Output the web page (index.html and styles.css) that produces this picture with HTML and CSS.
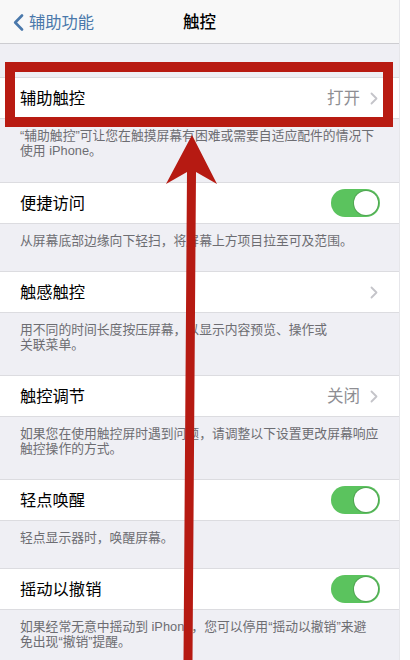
FILE: index.html
```html
<!DOCTYPE html>
<html lang="zh-CN">
<head>
<meta charset="utf-8">
<title>触控</title>
<link rel="stylesheet" href="styles.css">
</head>
<body>
<div class="screen">
  <header class="nav">
    <div class="back">
      <svg class="back-icon" width="11" height="17" viewBox="0 0 11 17"><path d="M9 1.5 L2.2 8.5 L9 15.5" fill="none" stroke="#4a78ab" stroke-width="2.6" stroke-linecap="round" stroke-linejoin="round"/></svg>
      <span class="back-text">辅助功能</span>
    </div>
    <div class="title">触控</div>
    <div></div>
  </header>

  <main class="list">
    <div class="cell">
      <span class="label">辅助触控</span>
      <span class="accessory"><span class="value">打开</span><svg class="chev" width="8" height="13" viewBox="0 0 8 13"><path d="M1.5 1.5 L6.5 6.5 L1.5 11.5" fill="none" stroke="#c4c4c9" stroke-width="1.8" stroke-linecap="round" stroke-linejoin="round"/></svg></span>
    </div>
    <div class="footer first">“辅助触控”可让您在触摸屏幕有困难或需要自适应配件的情况下<br>使用 iPhone。</div>

    <div class="cell">
      <span class="label">便捷访问</span>
      <span class="toggle"><span class="knob"></span></span>
    </div>
    <div class="footer">从屏幕底部边缘向下轻扫，将屏幕上方项目拉至可及范围。</div>

    <div class="cell">
      <span class="label">触感触控</span>
      <span class="accessory"><svg class="chev" width="8" height="13" viewBox="0 0 8 13"><path d="M1.5 1.5 L6.5 6.5 L1.5 11.5" fill="none" stroke="#c4c4c9" stroke-width="1.8" stroke-linecap="round" stroke-linejoin="round"/></svg></span>
    </div>
    <div class="footer">用不同的时间长度按压屏幕，以显示内容预览、操作或<br>关联菜单。</div>

    <div class="cell">
      <span class="label">触控调节</span>
      <span class="accessory"><span class="value">关闭</span><svg class="chev" width="8" height="13" viewBox="0 0 8 13"><path d="M1.5 1.5 L6.5 6.5 L1.5 11.5" fill="none" stroke="#c4c4c9" stroke-width="1.8" stroke-linecap="round" stroke-linejoin="round"/></svg></span>
    </div>
    <div class="footer">如果您在使用触控屏时遇到问题，请调整以下设置更改屏幕响应<br>触控操作的方式。</div>

    <div class="cell">
      <span class="label">轻点唤醒</span>
      <span class="toggle"><span class="knob"></span></span>
    </div>
    <div class="footer">轻点显示器时，唤醒屏幕。</div>

    <div class="cell">
      <span class="label">摇动以撤销</span>
      <span class="toggle"><span class="knob"></span></span>
    </div>
    <div class="footer">如果经常无意中摇动到 iPhone，您可以停用“摇动以撤销”来避<br>免出现“撤销”提醒。</div>
  </main>

  <div class="highlight-box"></div>
  <svg class="arrow" width="400" height="660" viewBox="0 0 400 660">
    <polygon points="192,135 217,184 196,172 192.5,660 183.5,660 187,172 166,184" fill="#b61a12"/>
  </svg>
</div>
</body>
</html>
```

FILE: styles.css
```css
* {
  box-sizing: border-box;
}

html, body {
  margin: 0;
  padding: 0;
  background: #ffffff;
}

body {
  font-family: "Liberation Sans", "Noto Sans CJK SC", sans-serif;
  color: #000;
}

.screen {
  position: relative;
  width: 400px;
  height: 660px;
  overflow: hidden;
  background: #efeff4;
  border-right: 1px solid #e6e6ea;
}

.nav {
  height: 44px;
  background: #f8f8f8;
  border-bottom: 1px solid #cdcdd1;
  display: grid;
  grid-template-columns: 1fr auto 1fr;
  align-items: center;
}

.back {
  display: flex;
  align-items: center;
  padding-left: 13px;
  gap: 5px;
  color: #4a78ab;
}

.back-icon {
  display: block;
  margin-top: 1px;
}

.back-text {
  font-size: 16.3px;
  line-height: 20px;
}

.title {
  font-size: 16.5px;
  font-weight: 500;
  line-height: 20px;
}

.list {
  padding-top: 33px;
}

.cell {
  height: 42px;
  background: #ffffff;
  border-top: 1px solid #dcdce0;
  border-bottom: 1px solid #dcdce0;
  display: flex;
  align-items: center;
  justify-content: space-between;
  padding: 0 19px 0 20px;
}

.label {
  font-size: 16.3px;
  line-height: 20px;
}

.accessory {
  display: flex;
  align-items: center;
  gap: 10px;
  padding-right: 2px;
}

.value {
  font-size: 16.5px;
  line-height: 20px;
  color: #8e8e93;
}

.chev {
  display: block;
}

.toggle {
  width: 49px;
  height: 28px;
  border-radius: 14px;
  background: #5bc35e;
  display: flex;
  align-items: center;
  justify-content: flex-end;
  padding-right: 2px;
}

.knob {
  width: 24px;
  height: 24px;
  border-radius: 50%;
  background: #ffffff;
  box-shadow: 0 0 0 1px rgba(60, 110, 60, 0.35);
}

.footer {
  font-size: 12.8px;
  line-height: 15px;
  color: #6d6d72;
  padding: 9px 10px 23px 20px;
  white-space: nowrap;
}

.footer.first {
  padding-bottom: 24px;
}

.highlight-box {
  position: absolute;
  left: 5px;
  top: 62px;
  width: 388px;
  height: 65px;
  border: 10px solid #b81b12;
}

.arrow {
  position: absolute;
  left: 0;
  top: 0;
  display: block;
}
```
